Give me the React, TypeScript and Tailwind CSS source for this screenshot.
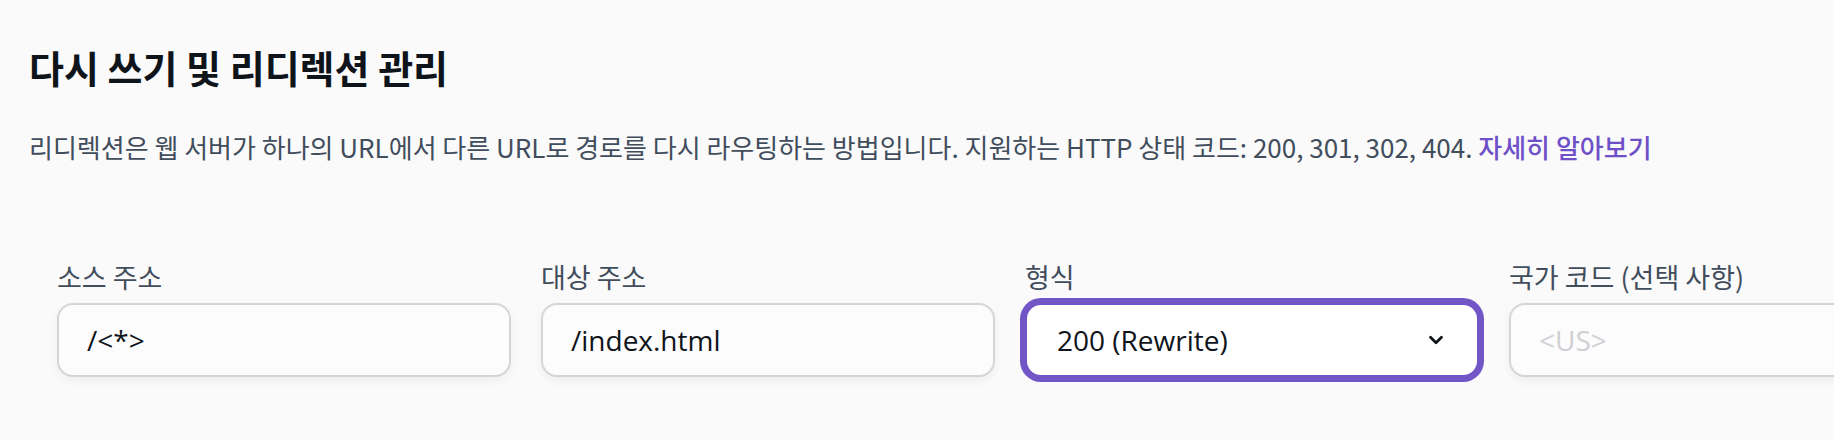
import { ChevronDown } from 'lucide-react';

const ko = { fontFamily: '"Noto Sans CJK KR", "Noto Sans", sans-serif' };
const latin = { fontFamily: '"Open Sans", "Noto Sans CJK KR", sans-serif' };

interface Field {
  label: string;
  value?: string;
  placeholder?: string;
  select?: boolean;
}

const fields: Field[] = [
  { label: '소스 주소', value: '/<*>' },
  { label: '대상 주소', value: '/index.html' },
  { label: '형식', value: '200 (Rewrite)', select: true },
  { label: '국가 코드 (선택 사항)', placeholder: '<US>' },
];

export default function App() {
  return (
    <div className="w-[1834px] h-[440px] overflow-hidden bg-[#fafafa]" style={ko}>
      <div className="pt-[44px] pl-[29px]">
        <h1 className="text-[38px] leading-[46px] font-bold text-[#0f141a]">
          다시 쓰기 및 리디렉션 관리
        </h1>
        <p className="mt-[40px] text-[26px] leading-[34px] text-[#414d5c] whitespace-nowrap">
          리디렉션은 웹 서버가 하나의 URL에서 다른 URL로 경로를 다시 라우팅하는 방법입니다. 지원하는 HTTP 상태 코드: 200, 301, 302, 404.{' '}
          <a className="text-[#6e50c8] font-medium">자세히 알아보기</a>
        </p>

        <div className="mt-[97px] pl-[28px] grid grid-cols-[repeat(4,454px)] gap-x-[30px]">
          {fields.map((f) => (
            <div key={f.label} className="flex flex-col">
              <label className="text-[27px] leading-[32px] text-[#414d5c] whitespace-nowrap">
                {f.label}
              </label>
              {f.select ? (
                <div className="mt-[10px] h-[74px] rounded-[16px] border-2 border-[#7256c6] shadow-[0_0_0_5px_#7256c6] bg-white flex items-center justify-between pl-[30px] pr-[30px]">
                  <span className="text-[28px] text-[#0f141a]" style={latin}>
                    {f.value}
                  </span>
                  <ChevronDown className="w-[22px] h-[22px] text-[#0f141a]" strokeWidth={3} />
                </div>
              ) : (
                <div className="mt-[10px] h-[74px] rounded-[16px] border-2 border-[#d5d5d5] bg-[#fcfcfc] shadow-[0_4px_10px_rgba(0,0,0,0.05)] flex items-center pl-[28px]">
                  <span
                    className={`text-[28px] ${f.value ? 'text-[#0f141a]' : 'text-[#cfcfd4]'}`}
                    style={latin}
                  >
                    {f.value ?? f.placeholder}
                  </span>
                </div>
              )}
            </div>
          ))}
        </div>
      </div>
    </div>
  );
}
